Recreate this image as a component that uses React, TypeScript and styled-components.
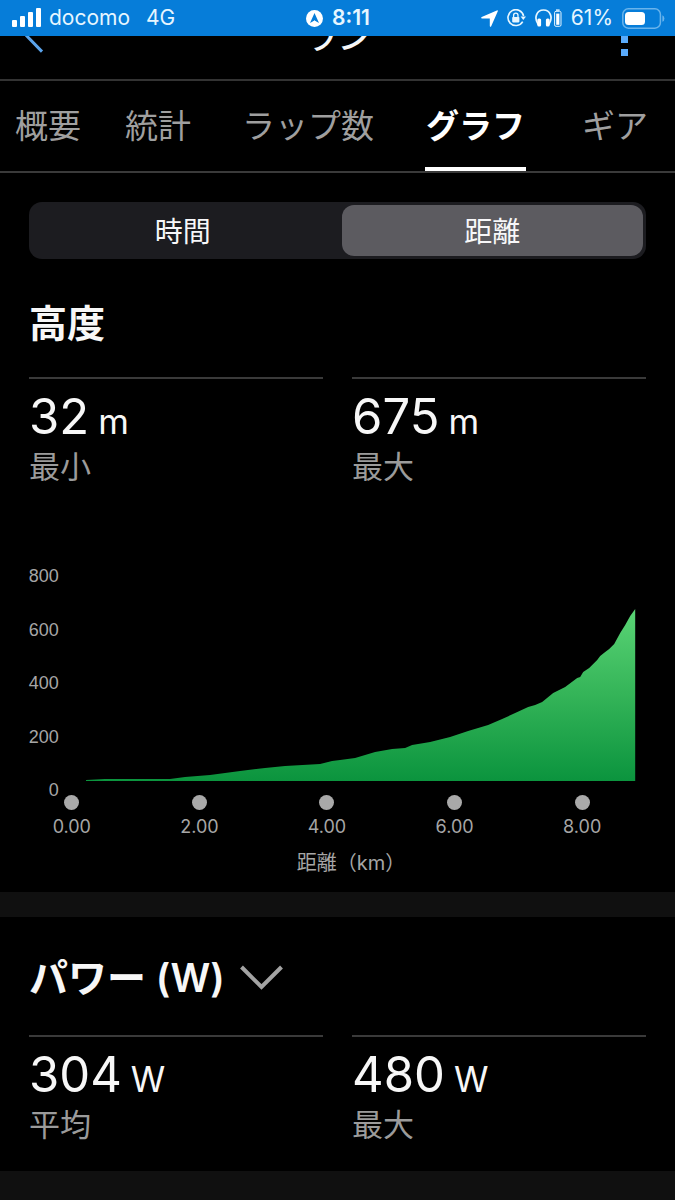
import React, { useState } from "react";
import styled, { createGlobalStyle } from "styled-components";

const GlobalStyle = createGlobalStyle`
  *, *::before, *::after { box-sizing: border-box; }
  html { background: #000; }
  body {
    margin: 0;
    background: #000;
    color: #f7f7f7;
    font-family: Inter, "Noto Sans CJK JP", sans-serif;
  }
  button {
    border: 0;
    margin: 0;
    padding: 0;
    background: none;
    color: inherit;
    font: inherit;
    cursor: pointer;
  }
  h1, h2, dl, dd, dt, p, figure { margin: 0; }
  svg { display: block; flex: none; }
`;

const Page = styled.div`
  display: flex;
  flex-direction: column;
  min-height: 100vh;
`;

const StatusBar = styled.div`
  display: grid;
  grid-template-columns: 1fr auto 1fr;
  align-items: center;
  height: 36px;
  padding: 0 10px 0 11px;
  background: #067dd9;
  color: #e6f6ff;
  font-size: 21px;
  line-height: 24px;
`;

const StatusGroup = styled.div<{ $end?: boolean; $gap: number }>`
  display: flex;
  align-items: center;
  justify-content: ${(p) => (p.$end ? "flex-end" : "flex-start")};
  gap: ${(p) => p.$gap}px;
`;

const Clock = styled.span`
  font-weight: 600;
`;

const Network = styled.span`
  margin-left: 8px;
`;

const TitleBar = styled.header`
  display: grid;
  grid-template-columns: 1fr auto 1fr;
  grid-template-rows: 43px;
  align-items: end;
  height: 45px;
  padding: 0 25px;
  overflow: hidden;
  border-bottom: 2px solid #333;
`;

const Title = styled.h1`
  padding-bottom: 22px;
  font-size: 33px;
  font-weight: 500;
  line-height: 40px;
`;

const BackButton = styled.button`
  justify-self: start;
  padding-bottom: 26px;
`;

const MoreButton = styled.button`
  justify-self: end;
  padding: 0 21px 23px 0;
`;

const Tabs = styled.div`
  display: grid;
  grid-template-columns: 96fr 124fr 176fr 159fr 120fr;
  height: 92px;
  border-bottom: 2px solid #3a3a3a;
`;

const Tab = styled.button<{ $active: boolean }>`
  display: flex;
  justify-content: center;
  color: ${(p) => (p.$active ? "#fff" : "#9f9f9f")};
  font-size: 33px;
  font-weight: ${(p) => (p.$active ? 700 : 400)};
  line-height: 90px;
  white-space: nowrap;

  span {
    height: 90px;
    padding: 0 1px;
    border-bottom: 4px solid ${(p) => (p.$active ? "#fff" : "transparent")};
  }
`;

const Segments = styled.div`
  display: grid;
  grid-template-columns: 1fr 1fr;
  gap: 8px;
  height: 57px;
  margin: 29px 29px 0;
  padding: 3px;
  border-radius: 13px;
  background: #1c1c20;
`;

const Segment = styled.button<{ $active: boolean }>`
  padding-top: 3px;
  border-radius: 12px;
  background: ${(p) => (p.$active ? "#5c5b60" : "transparent")};
  color: #f7f7f9;
  font-size: 28px;
  line-height: 48px;
`;

const Section = styled.section<{ $top: number; $bottom: number }>`
  padding: ${(p) => p.$top}px 29px ${(p) => p.$bottom}px;
`;

const Divider = styled.div`
  flex: none;
  height: 25px;
  background: #101010;
`;

const LastDivider = styled(Divider)`
  flex: 1 0 28px;
`;

const SectionTitle = styled.h2<{ $gap: number }>`
  margin-bottom: ${(p) => p.$gap}px;
  font-size: 38px;
  font-weight: 700;
  line-height: 60px;
`;

const MetricButton = styled.button`
  display: flex;
  align-items: center;
  gap: 15px;
  font-size: 39px;
  font-weight: 600;
`;

const Stats = styled.dl`
  display: grid;
  grid-template-columns: 1fr 1fr;
  gap: 29px;
`;

const Stat = styled.div`
  display: flex;
  flex-direction: column-reverse;
  justify-content: flex-end;
  padding-top: 8px;
  border-top: 2px solid #3a3a3a;
`;

const StatLabel = styled.dt`
  color: #9b9b9b;
  font-size: 31px;
  line-height: 40px;
`;

const StatValue = styled.dd`
  display: flex;
  align-items: baseline;
  gap: 9px;
  font-size: 49px;
  line-height: 60px;
`;

const Unit = styled.span`
  font-size: 35px;
  line-height: 36px;
`;

const Chart = styled.figure`
  margin: 78px 0 0 -21px;
  color: #a6a6a6;
  font-size: 18px;
`;

const Plot = styled.div`
  display: grid;
  grid-template-columns: 1fr 9fr;
`;

const YAxis = styled.div`
  display: flex;
  flex-direction: column;
  justify-content: space-between;
  height: 236px;
  padding-right: 13px;
  font-family: "Liberation Sans", sans-serif;
  line-height: 22px;
  text-align: right;
`;

const AreaSvg = styled.svg`
  width: 100%;
  height: 216px;
`;

const XAxis = styled.div`
  display: grid;
  grid-template-columns: repeat(5, 1fr);
`;

const Tick = styled.div`
  display: flex;
  flex-direction: column;
  align-items: center;
  gap: 6px;
  line-height: 22px;

  &::before {
    content: "";
    width: 15px;
    height: 15px;
    margin-top: -6px;
    border-radius: 50%;
    background: #a9a9a9;
  }
`;

const AxisTitle = styled.figcaption`
  margin: 10px 16px 0 64px;
  font-size: 20px;
  line-height: 30px;
  text-align: center;
`;

/* Elevation profile in plot units: x along the distance axis, y down from the top. */
const profile: [number, number][] = [
  [14, 215], [33, 214], [98, 214], [113, 212], [138, 210], [168, 206],
  [193, 203], [213, 201], [248, 199], [260, 196], [268, 195], [283, 193],
  [303, 187], [320, 184], [333, 183], [340, 180], [358, 177], [378, 172],
  [396, 166], [416, 160], [430, 154], [443, 148], [456, 142], [463, 140],
  [470, 137], [481, 128], [493, 122], [505, 113], [508, 112], [511, 107],
  [517, 103], [525, 95], [528, 91], [533, 87], [537, 84], [542, 79],
  [548, 68], [553, 60], [558, 51], [563, 44], [563, 216], [14, 216],
];

const SignalIcon = () => (
  <svg width="30" height="20" viewBox="0 0 30 20" fill="#fff">
    <rect x="1" y="12" width="5" height="7" rx="1" />
    <rect x="9" y="8" width="5" height="11" rx="1" />
    <rect x="17" y="4" width="5" height="15" rx="1" />
    <rect x="25" y="0" width="5" height="19" rx="1" />
  </svg>
);

const CompassIcon = () => (
  <svg width="17" height="17" viewBox="0 0 17 17">
    <circle cx="8.5" cy="8.5" r="8.5" fill="#fff" />
    <path d="M8.5 3 L13 13 L8.5 10.4 L4 13 Z" fill="#067dd9" />
    <path d="M8.5 10.2 L10.4 13.2 H6.6 Z" fill="#fff" />
  </svg>
);

const LocationIcon = () => (
  <svg width="17" height="17" viewBox="0 0 17 17" fill="#fff">
    <path d="M16.4 0.2 Q17.2 0.2 16.8 1.2 L10.2 16.2 Q9.2 17.6 8.8 15.9 V8.6 H1 Q-0.6 8 0.7 7 Z" />
  </svg>
);

const RotationLockIcon = () => (
  <svg width="19" height="18" viewBox="0 0 19 18" fill="none" stroke="#e6f6ff">
    <path d="M15.7 12.6 A7.9 7.9 0 1 1 16.6 7" strokeWidth="1.6" />
    <path d="M13.6 7.6 H19 L16.3 11 Z" fill="#e6f6ff" stroke="none" />
    <rect x="5.2" y="8" width="7.2" height="5.4" rx="0.8" fill="#e6f6ff" stroke="none" />
    <path d="M6.6 8 V6.4 a2.2 2.2 0 0 1 4.4 0 V8" strokeWidth="1.3" />
  </svg>
);

const HeadphonesIcon = () => (
  <svg width="27" height="18" viewBox="0 0 27 18" fill="none" stroke="#e6f6ff">
    <path d="M3.2 15.4 C-1.6 8.4 2 1 8.5 1 S18.6 8.4 13.8 15.4" strokeWidth="1.7" />
    <rect x="2.3" y="9.5" width="3.8" height="8" rx="1.5" fill="#fff" stroke="none" />
    <rect x="10.9" y="9.5" width="3.8" height="8" rx="1.5" fill="#fff" stroke="none" />
    <rect x="19.6" y="2.3" width="6.4" height="15" rx="1.4" strokeWidth="1" />
    <rect x="21" y="0.4" width="3.6" height="1.4" fill="#e6f6ff" stroke="none" />
    <rect x="21.2" y="4.6" width="3.2" height="11.2" fill="#fff" stroke="none" />
  </svg>
);

const BatteryIcon = () => (
  <svg width="43" height="21" viewBox="0 0 43 21">
    <rect x="0.8" y="0.8" width="37.6" height="19.4" rx="5.5" fill="none" stroke="#6ab4ec" strokeWidth="1.5" />
    <rect x="3" y="4" width="20" height="13" rx="3.5" fill="#fff" />
    <path d="M40.4 7.2 Q42.4 8 42.4 10.5 T40.4 13.8 Z" fill="#6ab4ec" />
  </svg>
);

const BackIcon = () => (
  <svg width="20" height="34" viewBox="0 0 20 34" fill="none" stroke="#5ba4ec" strokeWidth="3">
    <path d="M17 1 L1.6 16.8 L17 32.6" />
  </svg>
);

const MoreIcon = () => (
  <svg width="8" height="33" viewBox="0 0 8 33" fill="#5aabfb">
    <rect x="0" y="0" width="7" height="7" />
    <rect x="0" y="13" width="7" height="7" />
    <rect x="0" y="26" width="7" height="7" />
  </svg>
);

const ExpandIcon = () => (
  <svg width="43" height="26" viewBox="0 0 43 26" fill="none" stroke="#a3a3a3" strokeWidth="4">
    <path d="M1.5 2 L21.5 22 L41.5 2" />
  </svg>
);

type StatItem = { label: string; value: string; unit: string };

const StatList = ({ items }: { items: StatItem[] }) => (
  <Stats>
    {items.map((item) => (
      <Stat key={item.label}>
        <StatLabel>{item.label}</StatLabel>
        <StatValue>
          {item.value}
          <Unit>{item.unit}</Unit>
        </StatValue>
      </Stat>
    ))}
  </Stats>
);

const tabNames = ["概要", "統計", "ラップ数", "グラフ", "ギア"];
const axisModes = ["時間", "距離"];

export default function App() {
  const [tab, setTab] = useState("グラフ");
  const [mode, setMode] = useState("距離");

  return (
    <Page>
      <GlobalStyle />
      <StatusBar>
        <StatusGroup $gap={8}>
          <SignalIcon />
          <span>docomo</span>
          <Network>4G</Network>
        </StatusGroup>
        <StatusGroup $gap={9}>
          <CompassIcon />
          <Clock>8:11</Clock>
        </StatusGroup>
        <StatusGroup $end $gap={9}>
          <LocationIcon />
          <RotationLockIcon />
          <HeadphonesIcon />
          <span>61%</span>
          <BatteryIcon />
        </StatusGroup>
      </StatusBar>

      <TitleBar>
        <BackButton aria-label="戻る">
          <BackIcon />
        </BackButton>
        <Title>ラン</Title>
        <MoreButton aria-label="その他">
          <MoreIcon />
        </MoreButton>
      </TitleBar>

      <Tabs role="tablist">
        {tabNames.map((name) => (
          <Tab
            key={name}
            role="tab"
            aria-selected={tab === name}
            $active={tab === name}
            onClick={() => setTab(name)}
          >
            <span>{name}</span>
          </Tab>
        ))}
      </Tabs>

      <main>
        <Segments role="group" aria-label="横軸">
          {axisModes.map((name) => (
            <Segment
              key={name}
              aria-pressed={mode === name}
              $active={mode === name}
              onClick={() => setMode(name)}
            >
              {name}
            </Segment>
          ))}
        </Segments>

        <Section $top={34} $bottom={14}>
          <SectionTitle $gap={24}>高度</SectionTitle>
          <StatList
            items={[
              { label: "最小", value: "32", unit: "m" },
              { label: "最大", value: "675", unit: "m" },
            ]}
          />
          <Chart>
            <Plot>
              <YAxis>
                {[800, 600, 400, 200, 0].map((v) => (
                  <span key={v}>{v}</span>
                ))}
              </YAxis>
              <AreaSvg viewBox="0 0 574 216" preserveAspectRatio="none" role="img" aria-label="高度グラフ">
                <defs>
                  <linearGradient id="elevation" x1="0" y1="0" x2="0" y2="1">
                    <stop offset="0" stopColor="#5ad475" />
                    <stop offset="0.5" stopColor="#34b458" />
                    <stop offset="1" stopColor="#0b943e" />
                  </linearGradient>
                </defs>
                <polygon points={profile.map((p) => p.join(",")).join(" ")} fill="url(#elevation)" />
              </AreaSvg>
            </Plot>
            <XAxis>
              {["0.00", "2.00", "4.00", "6.00", "8.00"].map((v) => (
                <Tick key={v}>{v}</Tick>
              ))}
            </XAxis>
            <AxisTitle>距離（km）</AxisTitle>
          </Chart>
        </Section>

        <Divider />

        <Section $top={31} $bottom={26}>
          <SectionTitle $gap={27}>
            <MetricButton>
              パワー (W)
              <ExpandIcon />
            </MetricButton>
          </SectionTitle>
          <StatList
            items={[
              { label: "平均", value: "304", unit: "W" },
              { label: "最大", value: "480", unit: "W" },
            ]}
          />
        </Section>
      </main>
      <LastDivider />
    </Page>
  );
}
